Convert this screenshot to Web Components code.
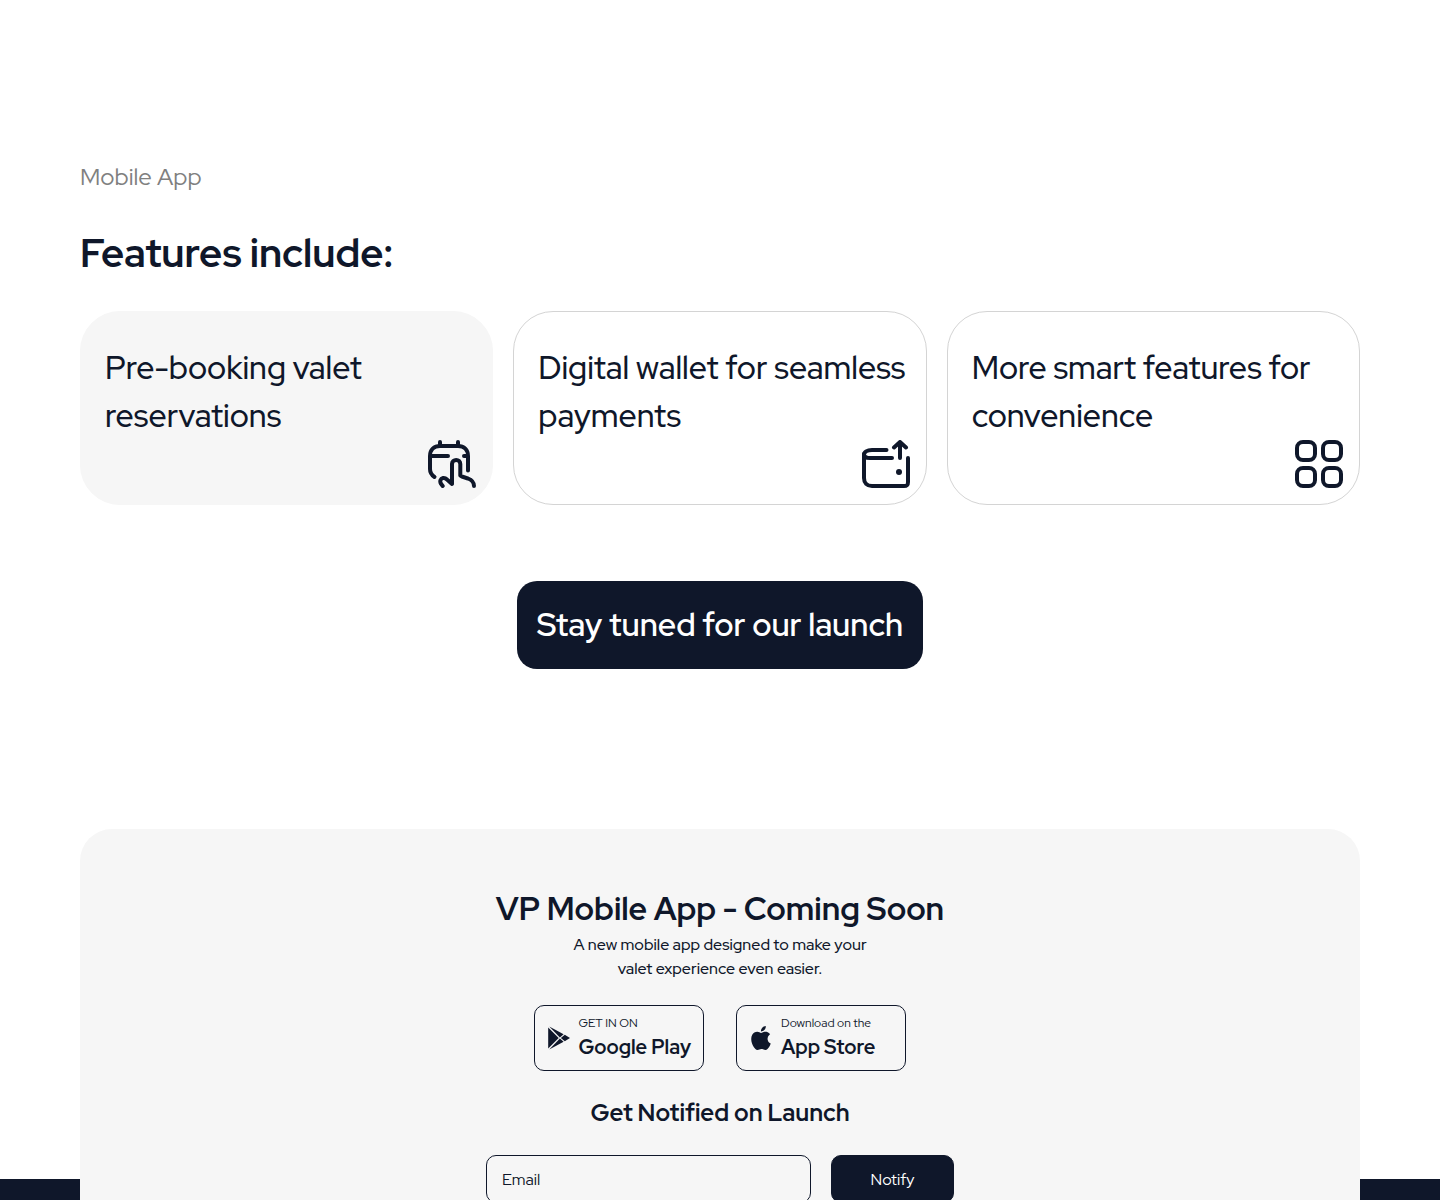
<!DOCTYPE html>
<html lang="en">
<head>
<meta charset="utf-8">
<meta name="viewport" content="width=device-width, initial-scale=1">
<title>VP Mobile App</title>
<style>
  :root { --ink: #0f172a; --panel: #f6f6f6; --line: #d4d4d4; --muted: #808080; }
  body { margin: 0; background: #fff; color: var(--ink); font-family: "Red Hat Display", Lato, sans-serif; }
</style>
</head>
<body>
<vp-page>
  <vp-features>
    <vp-feature filled>Pre-booking valet reservations
      <svg slot="icon" width="48" height="48" viewBox="0 0 48 48" fill="none" stroke="currentColor" stroke-width="4" stroke-linecap="round" stroke-linejoin="round" aria-hidden="true">
        <path d="M6.500 37C3.500 35 2 32.500 2 29V16C2 10 6 6 12 6H30C36 6 40 10 40 16V30.500M12 2V6M30 2V6M2 16H20M36 16H40"/>
        <path d="M14.700 46 13 43.800C11.500 41.500 12.500 38.500 15 38 16.500 37.700 17.500 38 19 39.500L24 44V24C24 21.500 26 20 28.200 20S32.300 21.500 32.300 24V35.500C34 37 37 37.500 40 38.500 43.500 39.800 46 42 46 46"/>
      </svg>
    </vp-feature>
    <vp-feature>Digital wallet for seamless payments
      <svg slot="icon" width="48" height="48" viewBox="0 0 48 48" fill="none" stroke="currentColor" stroke-width="4" stroke-linecap="round" stroke-linejoin="round" aria-hidden="true">
        <path d="M24.500 10H10C5 10 2 12 2 15M2 14C2 16.500 4 18 8 18H30"/>
        <path d="M2 14V38C2 43 5 46 10 46H42C45 46 46 45 46 42V18M38 18V2.500M32 7.500 38 2 44 7.500"/>
        <circle cx="37" cy="32" r="3" fill="currentColor" stroke="none"/>
      </svg>
    </vp-feature>
    <vp-feature>More smart features for convenience
      <svg slot="icon" width="48" height="48" viewBox="0 0 48 48" fill="none" stroke="currentColor" stroke-width="4" aria-hidden="true">
        <rect x="2" y="2" width="18" height="18" rx="6"/><rect x="28" y="2" width="18" height="18" rx="6"/>
        <rect x="2" y="28" width="18" height="18" rx="6"/><rect x="28" y="28" width="18" height="18" rx="6"/>
      </svg>
    </vp-feature>
  </vp-features>
  <vp-notify>
    <vp-store-badge small="GET IN ON" store="Google Play">
      <svg slot="icon" width="24" height="24" viewBox="0 0 24 24" fill="currentColor" aria-hidden="true">
        <path d="M1.200 1.200 12 12 1.200 22.800z"/>
        <path d="M2.300 .2 17 8.200 13.200 11.400z"/>
        <path d="M2.300 23.800 17 15.800 13.200 12.600z"/>
        <path d="M14.200 12 18.200 8.600 23.600 12 18.200 15.400z"/>
      </svg>
    </vp-store-badge>
    <vp-store-badge small="Download on the" store="App Store">
      <svg slot="icon" width="24" height="24" viewBox="0 0 24 24" fill="currentColor" aria-hidden="true">
        <path d="M12.152 6.896c-.948 0-2.415-1.078-3.960-1.040-2.040.027-3.910 1.183-4.961 3.014-2.117 3.675-.546 9.103 1.519 12.090 1.013 1.454 2.208 3.090 3.792 3.039 1.520-.065 2.090-.987 3.935-.987 1.831 0 2.350.987 3.960.948 1.637-.026 2.676-1.480 3.676-2.948 1.156-1.688 1.636-3.325 1.662-3.415-.039-.013-3.182-1.221-3.220-4.857-.026-3.040 2.480-4.494 2.597-4.559-1.429-2.090-3.623-2.324-4.390-2.376-2-.156-3.675 1.090-4.610 1.090zM15.530 3.830c.843-1.012 1.400-2.427 1.245-3.830-1.207.052-2.662.805-3.532 1.818-.780.896-1.454 2.338-1.273 3.714 1.338.104 2.715-.688 3.559-1.701"/>
      </svg>
    </vp-store-badge>
  </vp-notify>
  <vp-footer slot="footer"></vp-footer>
</vp-page>

<script>
function define(name, html) {
  const template = document.createElement("template");
  template.innerHTML = "<style>*{box-sizing:border-box;margin:0}</style>" + html;
  customElements.define(name, class extends HTMLElement {
    constructor() {
      super();
      this.attachShadow({ mode: "open" }).append(template.content.cloneNode(true));
    }
    connectedCallback() {
      for (const node of this.shadowRoot.querySelectorAll("[data-attr]"))
        node.textContent = this.getAttribute(node.dataset.attr);
    }
  });
}

define("vp-page", `
  <style>
    :host { display: block; }
    main { display: flex; flex-direction: column; gap: 160px; padding: 159px 80px 0; }
  </style>
  <main><slot></slot></main>
  <slot name="footer"></slot>`);

define("vp-features", `
  <style>
    :host { display: flex; flex-direction: column; }
    p { font-size: 24px; line-height: 36px; font-weight: 400; color: var(--muted); }
    h2 { margin-top: 28px; font-size: 40px; line-height: 60px; font-weight: 700; }
    .cards { display: grid; grid-template-columns: repeat(3, minmax(0, 1fr)); gap: 20px; margin-top: 28px; }
    button { align-self: center; margin-top: 76px; padding: 20px; border: 0; border-radius: 20px;
      background: var(--ink); color: #fff; font-family: inherit; font-size: 32px; line-height: 48px; font-weight: 600; }
  </style>
  <p>Mobile App</p>
  <h2>Features include:</h2>
  <div class="cards"><slot></slot></div>
  <button type="button">Stay tuned for our launch</button>`);

define("vp-feature", `
  <style>
    :host { display: flex; flex-direction: column; box-sizing: border-box; padding: 32px 16px 16px 24px;
      border: 1px solid var(--line); border-radius: 40px; }
    :host([filled]) { background: var(--panel); border-color: var(--panel); }
    h3 { font-size: 32px; line-height: 48px; font-weight: 500; }
    .icon { display: flex; justify-content: flex-end; }
  </style>
  <h3><slot></slot></h3>
  <div class="icon"><slot name="icon"></slot></div>`);

define("vp-store-badge", `
  <style>
    :host { display: block; width: 170px; }
    a { display: flex; align-items: center; gap: 8px; padding: 8px 12px; border: 1px solid var(--ink);
      border-radius: 10px; color: inherit; text-decoration: none; white-space: nowrap; }
    span { display: flex; flex-direction: column; }
    small { font-size: 12px; line-height: 18px; }
    strong { font-size: 20px; line-height: 30px; font-weight: 700; }
  </style>
  <a href="#"><slot name="icon"></slot>
    <span><small data-attr="small"></small><strong data-attr="store"></strong></span>
  </a>`);

define("vp-notify", `
  <style>
    :host { display: flex; flex-direction: column; align-items: center; position: relative; z-index: 1;
      box-sizing: border-box; padding: 56px 24px; border-radius: 32px; background: var(--panel); text-align: center; }
    h2 { font-size: 32px; line-height: 48px; font-weight: 700; }
    p { max-width: 320px; font-size: 16px; line-height: 24px; font-weight: 500; }
    .stores { display: flex; flex-wrap: wrap; justify-content: center; gap: 32px; margin-top: 24px; text-align: left; }
    h3 { margin-top: 24px; font-size: 24px; line-height: 36px; font-weight: 700; }
    form { display: flex; gap: 20px; width: 100%; max-width: 468px; margin-top: 24px; }
    input, button { height: 48px; border: 1px solid var(--ink); border-radius: 10px; font: inherit; font-size: 16px; }
    input { flex: 1; min-width: 0; padding: 0 15px; background: transparent; color: inherit; }
    input::placeholder { color: var(--ink); opacity: 1; }
    button { width: 123px; background: var(--ink); color: #fff; }
  </style>
  <h2>VP Mobile App - Coming Soon</h2>
  <p>A new mobile app designed to make your valet experience even easier.</p>
  <div class="stores"><slot></slot></div>
  <h3>Get Notified on Launch</h3>
  <form><input type="email" placeholder="Email" aria-label="Email"><button type="button">Notify</button></form>`);

define("vp-footer", `
  <style>
    :host { display: block; margin-top: -80px; padding: 80px; background: var(--ink); }
  </style>`);
</script>
</body>
</html>
